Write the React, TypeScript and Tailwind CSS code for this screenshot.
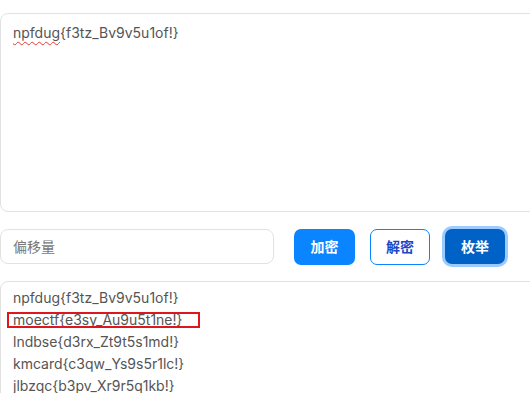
export default function App() {
  const lines = [
    'npfdug{f3tz_Bv9v5u1of!}',
    'moectf{e3sy_Au9u5t1ne!}',
    'lndbse{d3rx_Zt9t5s1md!}',
    'kmcard{c3qw_Ys9s5r1lc!}',
    'jlbzqc{b3pv_Xr9r5q1kb!}',
  ]

  return (
    <div
      className="w-[530px] h-[393px] overflow-hidden bg-white"
      style={{ fontFamily: 'Inter, "Noto Sans CJK SC", sans-serif' }}
    >
      <div className="w-[548px] pt-[13px] flex flex-col">
        {/* input text */}
        <div className="h-[199px] border border-[#e2e2e2] rounded-lg px-3 pt-[8px] text-[14px] leading-[22px] text-[#555]">
          <span className="underline decoration-wavy decoration-[#e53935] underline-offset-[3px] decoration-1">npfdug</span>
          {'{f3tz_Bv9v5u1of!}'}
        </div>

        {/* controls */}
        <div className="flex items-center mt-[17px] h-[35px]">
          <div className="w-[274px] h-[35px] border border-[#e2e2e2] rounded-lg px-3 flex items-center text-[14px] text-[#777]">
            偏移量
          </div>
          <button className="ml-[20px] w-[61px] h-[36px] rounded-[7px] bg-[#0a84ff] text-white text-[14px] font-bold">
            加密
          </button>
          <button className="ml-[15px] w-[60px] h-[36px] rounded-[7px] border border-[#0a84ff] bg-white text-[#1d47c9] text-[14px] font-bold">
            解密
          </button>
          <button className="ml-[15px] w-[60px] h-[35px] rounded-[7px] bg-[#0062c6] text-white text-[14px] font-bold shadow-[0_0_0_3px_#9ccbff]">
            枚举
          </button>
        </div>

        {/* output */}
        <div className="mt-[17px] h-[140px] border border-[#e2e2e2] rounded-lg px-3 pt-[5px] text-[14px] leading-[22px] text-[#555]">
          {lines.map((l, i) => (
            <div key={i} className="relative">
              {l}
              {i === 1 && (
                <div className="absolute left-[-6px] top-[3px] w-[193px] h-[16px] border-2 border-[#e0161e]" />
              )}
            </div>
          ))}
        </div>
      </div>
    </div>
  )
}
